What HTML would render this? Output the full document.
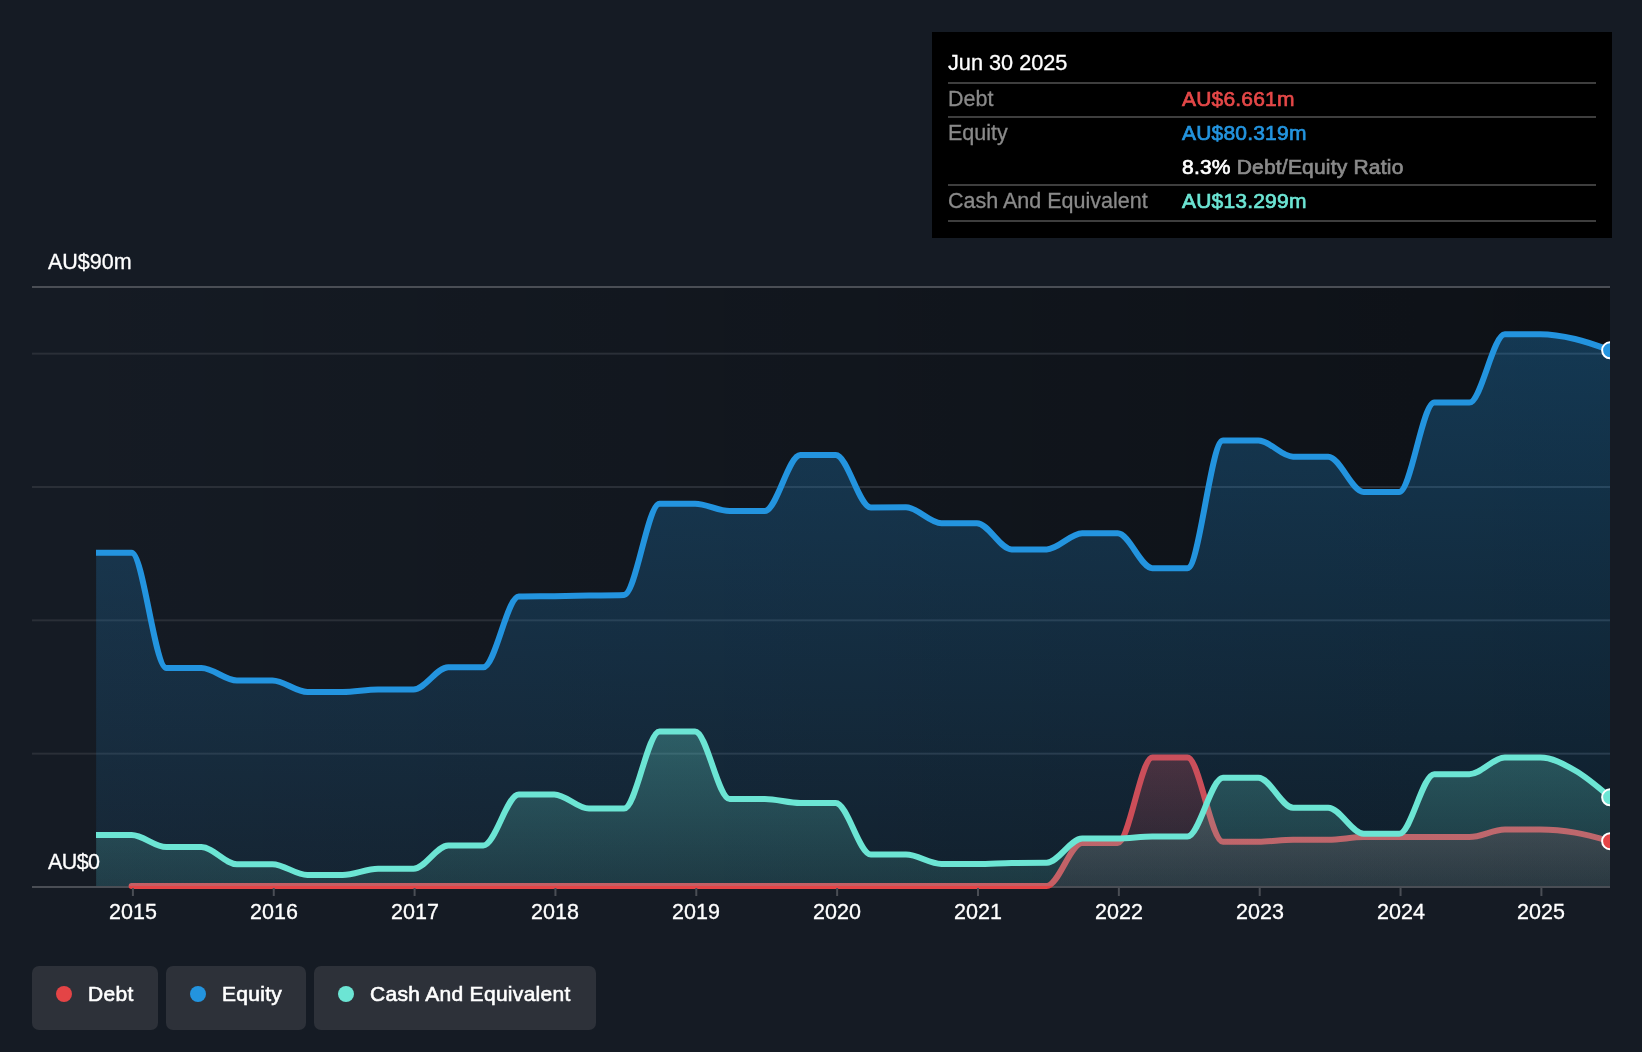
<!DOCTYPE html>
<html><head><meta charset="utf-8">
<style>
html,body{margin:0;padding:0;}
body{-webkit-font-smoothing:antialiased;width:1642px;height:1052px;background:#151b24;position:relative;overflow:hidden;font-family:"Liberation Sans",sans-serif;color:#fff;}
.yr{will-change:transform;-webkit-text-stroke:0.3px #fff;position:absolute;top:899px;width:120px;text-align:center;font-size:21.5px;line-height:26px;color:#fff;}
.ylab{will-change:transform;-webkit-text-stroke:0.3px #fff;position:absolute;left:48px;font-size:21.5px;line-height:26px;color:#fff;}
.tip{position:absolute;left:932px;top:32px;width:680px;height:206px;background:#000;}
.tip .t{will-change:transform;position:absolute;left:16px;font-size:21.5px;line-height:26px;white-space:nowrap;}
.tip .v{will-change:transform;position:absolute;left:250px;font-size:21px;letter-spacing:0.2px;line-height:26px;font-weight:normal;white-space:nowrap;}
.tip .sep{position:absolute;left:16px;width:648px;height:2px;background:#3e3e3e;}
.lg{position:absolute;top:966px;height:64px;background:#2d3139;border-radius:7px;}
.lg .dot{position:absolute;left:24px;top:20px;width:16px;height:16px;border-radius:50%;}
.lg .lt{will-change:transform;position:absolute;left:56px;top:14.8px;font-size:21px;letter-spacing:0.3px;line-height:26px;font-weight:normal;-webkit-text-stroke:0.6px #fff;white-space:nowrap;}
</style></head><body>
<svg width="1642" height="1052" viewBox="0 0 1642 1052" style="position:absolute;left:0;top:0">
<defs>
 <linearGradient id="plotbg" x1="0" y1="0" x2="1" y2="0">
  <stop offset="0" stop-color="#000" stop-opacity="0"/>
  <stop offset="1" stop-color="#000" stop-opacity="0.38"/>
 </linearGradient>
 <linearGradient id="eqg" gradientUnits="userSpaceOnUse" x1="0" y1="330" x2="0" y2="887">
  <stop offset="0" stop-color="#2394df" stop-opacity="0.30"/>
  <stop offset="1" stop-color="#2394df" stop-opacity="0.09"/>
 </linearGradient>
 <linearGradient id="cag" gradientUnits="userSpaceOnUse" x1="0" y1="730" x2="0" y2="887">
  <stop offset="0" stop-color="#6ce5d4" stop-opacity="0.28"/>
  <stop offset="1" stop-color="#6ce5d4" stop-opacity="0.12"/>
 </linearGradient>
 <linearGradient id="deg" gradientUnits="userSpaceOnUse" x1="0" y1="757" x2="0" y2="887">
  <stop offset="0" stop-color="#e44446" stop-opacity="0.30"/>
  <stop offset="1" stop-color="#e44446" stop-opacity="0.09"/>
 </linearGradient>
 <clipPath id="plotclip"><rect x="96" y="200" width="1514" height="700"/></clipPath>
</defs>
<rect x="32" y="287" width="1578" height="600" fill="url(#plotbg)"/>
<rect x="32" y="752.67" width="1578" height="2" fill="#2a2f37"/><rect x="32" y="619.33" width="1578" height="2" fill="#2a2f37"/><rect x="32" y="486.00" width="1578" height="2" fill="#2a2f37"/><rect x="32" y="352.67" width="1578" height="2" fill="#2a2f37"/>
<rect x="32" y="886" width="1578" height="2" fill="#4a4e55"/>
<g clip-path="url(#plotclip)">
<path d="M131.61,886.00C143.18,886.00 154.75,886.00 166.32,886.00C178.02,886.00 189.72,886.00 201.41,886.00C213.24,886.00 225.07,886.00 236.89,886.00C248.72,886.00 260.54,886.00 272.37,886.00C284.07,886.00 295.76,886.00 307.46,886.00C319.16,886.00 330.86,886.00 342.55,886.00C354.38,886.00 366.21,886.00 378.03,886.00C389.86,886.00 401.68,886.00 413.51,886.00C425.08,886.00 436.65,886.00 448.22,886.00C459.91,886.00 471.61,886.00 483.31,886.00C495.13,886.00 506.96,886.00 518.79,886.00C530.61,886.00 542.44,886.00 554.26,886.00C565.83,886.00 577.40,886.00 588.97,886.00C600.67,886.00 612.37,886.00 624.06,886.00C635.89,886.00 647.72,886.00 659.54,886.00C671.37,886.00 683.19,886.00 695.02,886.00C706.59,886.00 718.16,886.00 729.73,886.00C741.42,886.00 753.12,886.00 764.82,886.00C776.64,886.00 788.47,886.00 800.30,886.00C812.12,886.00 823.95,886.00 835.77,886.00C847.47,886.00 859.17,886.00 870.87,886.00C882.56,886.00 894.26,886.00 905.96,886.00C917.79,886.00 929.61,886.00 941.44,886.00C953.26,886.00 965.09,886.00 976.92,886.00C988.48,886.00 1000.05,886.00 1011.62,886.00C1023.32,886.00 1035.02,886.00 1046.71,886.00C1058.54,886.00 1070.37,843.00 1082.19,843.00C1094.02,843.00 1105.84,843.00 1117.67,843.00C1129.24,843.00 1140.81,757.60 1152.38,757.60C1164.07,757.60 1175.77,757.60 1187.47,757.60C1199.30,757.60 1211.12,841.80 1222.95,841.80C1234.77,841.80 1246.60,841.80 1258.43,841.80C1269.99,841.80 1281.56,839.80 1293.13,839.80C1304.83,839.80 1316.53,839.80 1328.22,839.80C1340.05,839.80 1351.88,837.00 1363.70,837.00C1375.53,837.00 1387.35,837.00 1399.18,837.00C1410.88,837.00 1422.58,837.00 1434.27,837.00C1445.97,837.00 1457.67,837.00 1469.36,837.00C1481.19,837.00 1493.02,829.60 1504.84,829.60C1516.67,829.60 1528.49,829.60 1540.32,829.60C1551.89,829.60 1563.46,830.69 1575.03,832.60C1586.72,834.53 1598.42,837.87 1610.12,841.20L1610.12,886 L131.61,886 Z" fill="url(#deg)"/>
<path d="M131.61,886.00C143.18,886.00 154.75,886.00 166.32,886.00C178.02,886.00 189.72,886.00 201.41,886.00C213.24,886.00 225.07,886.00 236.89,886.00C248.72,886.00 260.54,886.00 272.37,886.00C284.07,886.00 295.76,886.00 307.46,886.00C319.16,886.00 330.86,886.00 342.55,886.00C354.38,886.00 366.21,886.00 378.03,886.00C389.86,886.00 401.68,886.00 413.51,886.00C425.08,886.00 436.65,886.00 448.22,886.00C459.91,886.00 471.61,886.00 483.31,886.00C495.13,886.00 506.96,886.00 518.79,886.00C530.61,886.00 542.44,886.00 554.26,886.00C565.83,886.00 577.40,886.00 588.97,886.00C600.67,886.00 612.37,886.00 624.06,886.00C635.89,886.00 647.72,886.00 659.54,886.00C671.37,886.00 683.19,886.00 695.02,886.00C706.59,886.00 718.16,886.00 729.73,886.00C741.42,886.00 753.12,886.00 764.82,886.00C776.64,886.00 788.47,886.00 800.30,886.00C812.12,886.00 823.95,886.00 835.77,886.00C847.47,886.00 859.17,886.00 870.87,886.00C882.56,886.00 894.26,886.00 905.96,886.00C917.79,886.00 929.61,886.00 941.44,886.00C953.26,886.00 965.09,886.00 976.92,886.00C988.48,886.00 1000.05,886.00 1011.62,886.00C1023.32,886.00 1035.02,886.00 1046.71,886.00C1058.54,886.00 1070.37,843.00 1082.19,843.00C1094.02,843.00 1105.84,843.00 1117.67,843.00C1129.24,843.00 1140.81,757.60 1152.38,757.60C1164.07,757.60 1175.77,757.60 1187.47,757.60C1199.30,757.60 1211.12,841.80 1222.95,841.80C1234.77,841.80 1246.60,841.80 1258.43,841.80C1269.99,841.80 1281.56,839.80 1293.13,839.80C1304.83,839.80 1316.53,839.80 1328.22,839.80C1340.05,839.80 1351.88,837.00 1363.70,837.00C1375.53,837.00 1387.35,837.00 1399.18,837.00C1410.88,837.00 1422.58,837.00 1434.27,837.00C1445.97,837.00 1457.67,837.00 1469.36,837.00C1481.19,837.00 1493.02,829.60 1504.84,829.60C1516.67,829.60 1528.49,829.60 1540.32,829.60C1551.89,829.60 1563.46,830.69 1575.03,832.60C1586.72,834.53 1598.42,837.87 1610.12,841.20" fill="none" stroke="#e44446" stroke-width="6" stroke-linecap="round" stroke-linejoin="round"/>
<path d="M96.14,552.70C107.96,552.70 119.79,552.70 131.61,552.70C143.18,552.70 154.75,668.00 166.32,668.00C178.02,668.00 189.72,668.00 201.41,668.00C213.24,668.00 225.07,680.50 236.89,680.50C248.72,680.50 260.54,680.50 272.37,680.50C284.07,680.50 295.76,692.00 307.46,692.00C319.16,692.00 330.86,692.00 342.55,692.00C354.38,692.00 366.21,689.60 378.03,689.60C389.86,689.60 401.68,689.60 413.51,689.60C425.08,689.60 436.65,667.30 448.22,667.30C459.91,667.30 471.61,667.30 483.31,667.30C495.13,667.30 506.96,596.87 518.79,596.60C530.61,596.33 542.44,596.37 554.26,596.20C565.83,596.03 577.40,595.80 588.97,595.60C600.67,595.40 612.37,595.40 624.06,595.00C635.89,594.60 647.72,503.70 659.54,503.70C671.37,503.70 683.19,503.70 695.02,503.70C706.59,503.70 718.16,511.00 729.73,511.00C741.42,511.00 753.12,511.00 764.82,511.00C776.64,511.00 788.47,455.00 800.30,455.00C812.12,455.00 823.95,455.00 835.77,455.00C847.47,455.00 859.17,507.50 870.87,507.50C882.56,507.50 894.26,507.30 905.96,507.30C917.79,507.30 929.61,523.20 941.44,523.20C953.26,523.20 965.09,523.20 976.92,523.20C988.48,523.20 1000.05,549.40 1011.62,549.40C1023.32,549.40 1035.02,549.40 1046.71,549.40C1058.54,549.40 1070.37,533.30 1082.19,533.30C1094.02,533.30 1105.84,533.30 1117.67,533.30C1129.24,533.30 1140.81,568.20 1152.38,568.20C1164.07,568.20 1175.77,568.20 1187.47,568.20C1199.30,568.20 1211.12,440.50 1222.95,440.50C1234.77,440.50 1246.60,440.50 1258.43,440.50C1269.99,440.50 1281.56,456.70 1293.13,456.70C1304.83,456.70 1316.53,456.70 1328.22,456.70C1340.05,456.70 1351.88,491.90 1363.70,491.90C1375.53,491.90 1387.35,491.90 1399.18,491.90C1410.88,491.90 1422.58,402.60 1434.27,402.60C1445.97,402.60 1457.67,402.60 1469.36,402.60C1481.19,402.60 1493.02,334.30 1504.84,334.30C1516.67,334.30 1528.49,334.30 1540.32,334.30C1551.89,334.30 1563.46,336.36 1575.03,339.00C1586.72,341.67 1598.42,345.98 1610.12,350.30L1610.12,886 L96.14,886 Z" fill="url(#eqg)"/>
<path d="M96.14,835.00C107.96,835.00 119.79,835.00 131.61,835.00C143.18,835.00 154.75,847.10 166.32,847.10C178.02,847.10 189.72,847.10 201.41,847.10C213.24,847.10 225.07,864.20 236.89,864.20C248.72,864.20 260.54,864.20 272.37,864.20C284.07,864.20 295.76,875.00 307.46,875.00C319.16,875.00 330.86,875.00 342.55,875.00C354.38,875.00 366.21,868.80 378.03,868.80C389.86,868.80 401.68,868.80 413.51,868.80C425.08,868.80 436.65,845.50 448.22,845.50C459.91,845.50 471.61,845.50 483.31,845.50C495.13,845.50 506.96,794.40 518.79,794.40C530.61,794.40 542.44,794.40 554.26,794.40C565.83,794.40 577.40,808.60 588.97,808.60C600.67,808.60 612.37,808.60 624.06,808.60C635.89,808.60 647.72,731.40 659.54,731.40C671.37,731.40 683.19,731.40 695.02,731.40C706.59,731.40 718.16,799.00 729.73,799.00C741.42,799.00 753.12,799.00 764.82,799.00C776.64,799.00 788.47,803.00 800.30,803.00C812.12,803.00 823.95,803.00 835.77,803.00C847.47,803.00 859.17,854.60 870.87,854.60C882.56,854.60 894.26,854.60 905.96,854.60C917.79,854.60 929.61,864.00 941.44,864.00C953.26,864.00 965.09,864.00 976.92,864.00C988.48,864.00 1000.05,863.20 1011.62,863.00C1023.32,862.80 1035.02,862.90 1046.71,862.70C1058.54,862.50 1070.37,838.50 1082.19,838.50C1094.02,838.50 1105.84,838.50 1117.67,838.50C1129.24,838.50 1140.81,836.50 1152.38,836.50C1164.07,836.50 1175.77,836.50 1187.47,836.50C1199.30,836.50 1211.12,777.70 1222.95,777.70C1234.77,777.70 1246.60,777.70 1258.43,777.70C1269.99,777.70 1281.56,807.70 1293.13,807.70C1304.83,807.70 1316.53,807.70 1328.22,807.70C1340.05,807.70 1351.88,833.80 1363.70,833.80C1375.53,833.80 1387.35,833.80 1399.18,833.80C1410.88,833.80 1422.58,774.20 1434.27,774.20C1445.97,774.20 1457.67,774.20 1469.36,774.20C1481.19,774.20 1493.02,757.60 1504.84,757.60C1516.67,757.60 1528.49,757.60 1540.32,757.60C1551.89,757.60 1563.46,763.94 1575.03,770.50C1586.72,777.13 1598.42,787.21 1610.12,797.30L1610.12,886 L96.14,886 Z" fill="url(#cag)"/>
<path d="M96.14,552.70C107.96,552.70 119.79,552.70 131.61,552.70C143.18,552.70 154.75,668.00 166.32,668.00C178.02,668.00 189.72,668.00 201.41,668.00C213.24,668.00 225.07,680.50 236.89,680.50C248.72,680.50 260.54,680.50 272.37,680.50C284.07,680.50 295.76,692.00 307.46,692.00C319.16,692.00 330.86,692.00 342.55,692.00C354.38,692.00 366.21,689.60 378.03,689.60C389.86,689.60 401.68,689.60 413.51,689.60C425.08,689.60 436.65,667.30 448.22,667.30C459.91,667.30 471.61,667.30 483.31,667.30C495.13,667.30 506.96,596.87 518.79,596.60C530.61,596.33 542.44,596.37 554.26,596.20C565.83,596.03 577.40,595.80 588.97,595.60C600.67,595.40 612.37,595.40 624.06,595.00C635.89,594.60 647.72,503.70 659.54,503.70C671.37,503.70 683.19,503.70 695.02,503.70C706.59,503.70 718.16,511.00 729.73,511.00C741.42,511.00 753.12,511.00 764.82,511.00C776.64,511.00 788.47,455.00 800.30,455.00C812.12,455.00 823.95,455.00 835.77,455.00C847.47,455.00 859.17,507.50 870.87,507.50C882.56,507.50 894.26,507.30 905.96,507.30C917.79,507.30 929.61,523.20 941.44,523.20C953.26,523.20 965.09,523.20 976.92,523.20C988.48,523.20 1000.05,549.40 1011.62,549.40C1023.32,549.40 1035.02,549.40 1046.71,549.40C1058.54,549.40 1070.37,533.30 1082.19,533.30C1094.02,533.30 1105.84,533.30 1117.67,533.30C1129.24,533.30 1140.81,568.20 1152.38,568.20C1164.07,568.20 1175.77,568.20 1187.47,568.20C1199.30,568.20 1211.12,440.50 1222.95,440.50C1234.77,440.50 1246.60,440.50 1258.43,440.50C1269.99,440.50 1281.56,456.70 1293.13,456.70C1304.83,456.70 1316.53,456.70 1328.22,456.70C1340.05,456.70 1351.88,491.90 1363.70,491.90C1375.53,491.90 1387.35,491.90 1399.18,491.90C1410.88,491.90 1422.58,402.60 1434.27,402.60C1445.97,402.60 1457.67,402.60 1469.36,402.60C1481.19,402.60 1493.02,334.30 1504.84,334.30C1516.67,334.30 1528.49,334.30 1540.32,334.30C1551.89,334.30 1563.46,336.36 1575.03,339.00C1586.72,341.67 1598.42,345.98 1610.12,350.30" fill="none" stroke="#2394df" stroke-width="6" stroke-linecap="round" stroke-linejoin="round"/>
<path d="M96.14,835.00C107.96,835.00 119.79,835.00 131.61,835.00C143.18,835.00 154.75,847.10 166.32,847.10C178.02,847.10 189.72,847.10 201.41,847.10C213.24,847.10 225.07,864.20 236.89,864.20C248.72,864.20 260.54,864.20 272.37,864.20C284.07,864.20 295.76,875.00 307.46,875.00C319.16,875.00 330.86,875.00 342.55,875.00C354.38,875.00 366.21,868.80 378.03,868.80C389.86,868.80 401.68,868.80 413.51,868.80C425.08,868.80 436.65,845.50 448.22,845.50C459.91,845.50 471.61,845.50 483.31,845.50C495.13,845.50 506.96,794.40 518.79,794.40C530.61,794.40 542.44,794.40 554.26,794.40C565.83,794.40 577.40,808.60 588.97,808.60C600.67,808.60 612.37,808.60 624.06,808.60C635.89,808.60 647.72,731.40 659.54,731.40C671.37,731.40 683.19,731.40 695.02,731.40C706.59,731.40 718.16,799.00 729.73,799.00C741.42,799.00 753.12,799.00 764.82,799.00C776.64,799.00 788.47,803.00 800.30,803.00C812.12,803.00 823.95,803.00 835.77,803.00C847.47,803.00 859.17,854.60 870.87,854.60C882.56,854.60 894.26,854.60 905.96,854.60C917.79,854.60 929.61,864.00 941.44,864.00C953.26,864.00 965.09,864.00 976.92,864.00C988.48,864.00 1000.05,863.20 1011.62,863.00C1023.32,862.80 1035.02,862.90 1046.71,862.70C1058.54,862.50 1070.37,838.50 1082.19,838.50C1094.02,838.50 1105.84,838.50 1117.67,838.50C1129.24,838.50 1140.81,836.50 1152.38,836.50C1164.07,836.50 1175.77,836.50 1187.47,836.50C1199.30,836.50 1211.12,777.70 1222.95,777.70C1234.77,777.70 1246.60,777.70 1258.43,777.70C1269.99,777.70 1281.56,807.70 1293.13,807.70C1304.83,807.70 1316.53,807.70 1328.22,807.70C1340.05,807.70 1351.88,833.80 1363.70,833.80C1375.53,833.80 1387.35,833.80 1399.18,833.80C1410.88,833.80 1422.58,774.20 1434.27,774.20C1445.97,774.20 1457.67,774.20 1469.36,774.20C1481.19,774.20 1493.02,757.60 1504.84,757.60C1516.67,757.60 1528.49,757.60 1540.32,757.60C1551.89,757.60 1563.46,763.94 1575.03,770.50C1586.72,777.13 1598.42,787.21 1610.12,797.30" fill="none" stroke="#6ce5d4" stroke-width="6" stroke-linecap="round" stroke-linejoin="round"/>
<circle cx="1610.12" cy="841.2" r="8" fill="#e44446" stroke="#fff" stroke-width="2"/>
<circle cx="1610.12" cy="350.3" r="8" fill="#2394df" stroke="#fff" stroke-width="2"/>
<circle cx="1610.12" cy="797.3" r="8" fill="#6ce5d4" stroke="#fff" stroke-width="2"/>
</g>
<rect x="32" y="286" width="1578" height="2" fill="#4a4e55"/>
<rect x="131.90" y="888" width="2" height="8" fill="#4a4e55"/><rect x="272.75" y="888" width="2" height="8" fill="#4a4e55"/><rect x="413.60" y="888" width="2" height="8" fill="#4a4e55"/><rect x="554.45" y="888" width="2" height="8" fill="#4a4e55"/><rect x="695.30" y="888" width="2" height="8" fill="#4a4e55"/><rect x="836.15" y="888" width="2" height="8" fill="#4a4e55"/><rect x="977.00" y="888" width="2" height="8" fill="#4a4e55"/><rect x="1117.85" y="888" width="2" height="8" fill="#4a4e55"/><rect x="1258.70" y="888" width="2" height="8" fill="#4a4e55"/><rect x="1399.55" y="888" width="2" height="8" fill="#4a4e55"/><rect x="1540.40" y="888" width="2" height="8" fill="#4a4e55"/>
</svg>
<div class="ylab" style="top:249px">AU$90m</div>
<div class="ylab" style="top:849px;letter-spacing:-0.6px">AU$0</div>
<div class="yr" style="left:72.90px">2015</div><div class="yr" style="left:213.75px">2016</div><div class="yr" style="left:354.60px">2017</div><div class="yr" style="left:495.45px">2018</div><div class="yr" style="left:636.30px">2019</div><div class="yr" style="left:777.15px">2020</div><div class="yr" style="left:918.00px">2021</div><div class="yr" style="left:1058.85px">2022</div><div class="yr" style="left:1199.70px">2023</div><div class="yr" style="left:1340.55px">2024</div><div class="yr" style="left:1481.40px">2025</div>
<div class="tip">
 <div class="t" style="top:18px;font-size:21.7px;-webkit-text-stroke:0.3px #fff">Jun 30 2025</div>
 <div class="sep" style="top:50px"></div>
 <div class="t" style="top:54px;color:#8a8a8a;-webkit-text-stroke:0.3px #8a8a8a">Debt</div>
 <div class="v" style="top:54px;color:#e54848;-webkit-text-stroke:0.7px #e54848">AU$6.661m</div>
 <div class="sep" style="top:84px"></div>
 <div class="t" style="top:88px;color:#8a8a8a;-webkit-text-stroke:0.3px #8a8a8a">Equity</div>
 <div class="v" style="top:88px;color:#2394df;-webkit-text-stroke:0.7px #2394df">AU$80.319m</div>
 <div class="v" style="top:122px;color:#fff;-webkit-text-stroke:0.7px #fff">8.3% <span style="color:#8a8a8a;-webkit-text-stroke:0.7px #8a8a8a">Debt/Equity Ratio</span></div>
 <div class="sep" style="top:152px"></div>
 <div class="t" style="top:156px;color:#8a8a8a;-webkit-text-stroke:0.3px #8a8a8a">Cash And Equivalent</div>
 <div class="v" style="top:156px;color:#6ce5d4;-webkit-text-stroke:0.7px #6ce5d4">AU$13.299m</div>
 <div class="sep" style="top:188px"></div>
</div>
<div class="lg" style="left:32px;width:126px"><div class="dot" style="background:#e44446"></div><div class="lt">Debt</div></div>
<div class="lg" style="left:166px;width:140px"><div class="dot" style="background:#2394df"></div><div class="lt">Equity</div></div>
<div class="lg" style="left:314px;width:282px"><div class="dot" style="background:#6ce5d4"></div><div class="lt">Cash And Equivalent</div></div>
</body></html>
